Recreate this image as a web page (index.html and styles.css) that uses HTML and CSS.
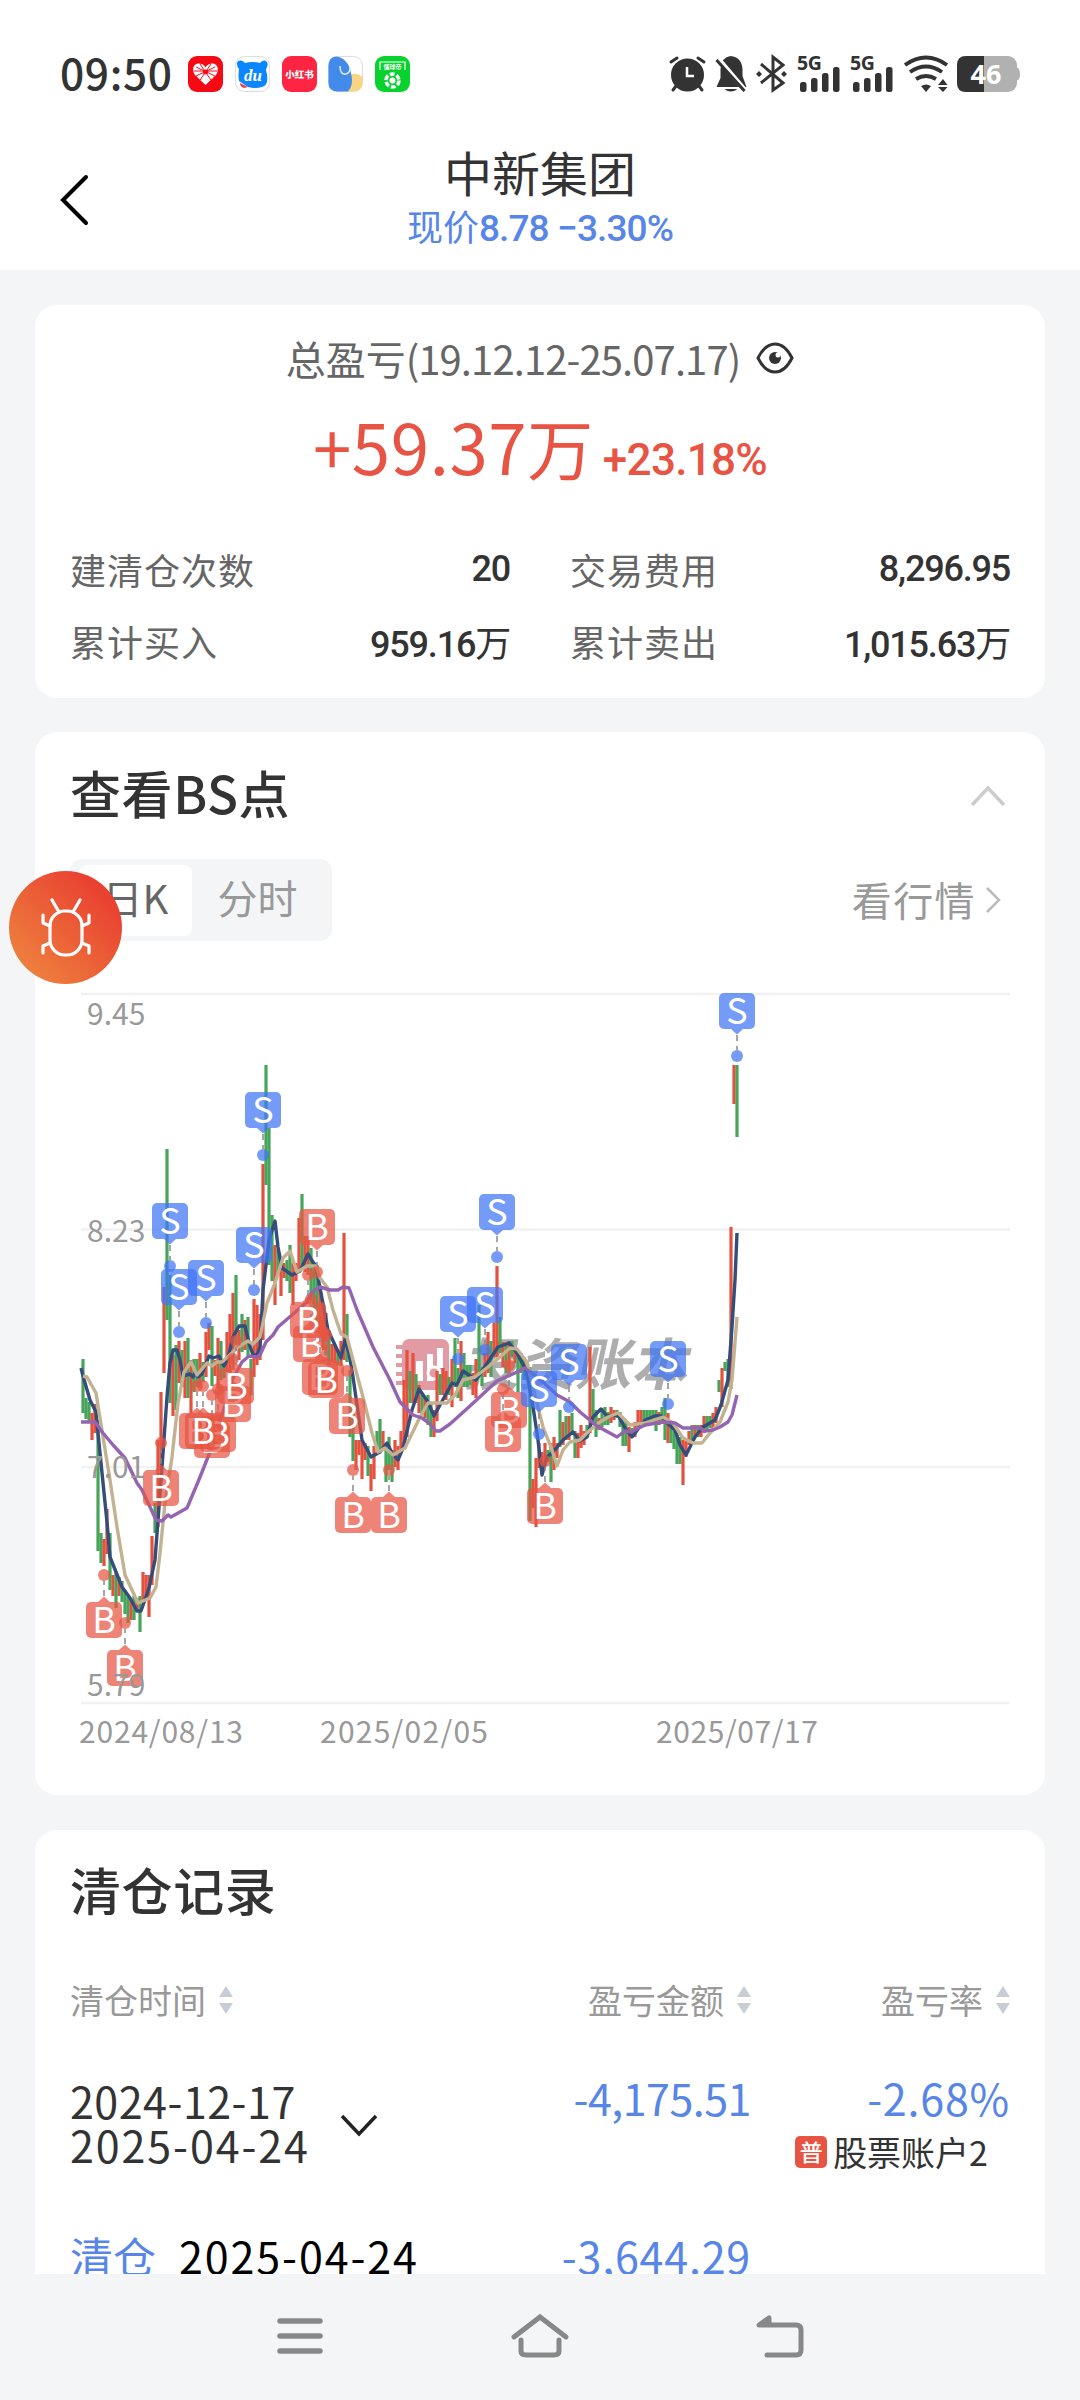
FILE: index.html
```
<!DOCTYPE html>
<html lang="zh-CN">
<head>
    <meta charset="UTF-8">
    <meta name="viewport" content="width=device-width, initial-scale=1.0">
    <title>中新集团</title>
    <link rel="stylesheet" href="styles.css">
</head>
<body>
    <header>
        <div class="status-bar">
            <span class="clock">09:50</span>
            <div class="app-icons">
                <svg width="35" height="36" viewBox="0 0 35 36">
                    <rect width="35" height="36" rx="9" fill="#f50a14"/>
                    <path d="M17.500 29L7 19C3 13 6 7 11 7.500Q16 8 17.500 11.500Q19 8 24 7.500C29 7 32 13 28 19Z" fill="#fff"/>
                    <path d="M8 11L27 20M27 11L8 20M12 8L23 24M23 8L12 24M6 15H29" stroke="#f50a14" stroke-width="1"/>
                    <circle cx="17.500" cy="16" r="2.500" fill="#f50a14"/>
                </svg>
                <svg width="35" height="36" viewBox="0 0 35 36">
                    <rect x=".5" y=".5" width="34" height="35" rx="9" fill="#fff" stroke="#ddd"/>
                    <path d="M2 8Q2 4 6 4.500Q9 5 10 7Q17 5 25 7Q27 4 30 4.500Q34 6 32 11Q31 13 31 14Q35 29 27 31Q20 33 13 31L4 25Q3 20 4 13Q2 11 2 8Z" fill="#0a86ff"/>
                    <path d="M5 27L13 31L9 32Q5 31 5 27Z" fill="#e8404c"/>
                    <text x="18" y="25" class="du">du</text>
                </svg>
                <svg width="35" height="36" viewBox="0 0 35 36">
                    <rect width="35" height="36" rx="9" fill="#ff2442"/>
                    <text x="17.500" y="22" class="red-book">小红书</text>
                </svg>
                <svg width="35" height="36" viewBox="0 0 35 36">
                    <rect x=".5" y=".5" width="34" height="35" rx="9" fill="#fff" stroke="#ddd"/>
                    <path d="M20 20Q27 15 34.500 21V27Q34 35 26 35.500H18Z" fill="#f8d483"/>
                    <path d="M8 .5Q20 2 23 17Q26 29 20 35.500H9Q.5 35 .5 27V9Q1 1 8 .5Z" fill="#428bea"/>
                    <path d="M12 10Q12 19 18 18Q22 17 22 12" fill="none" stroke="#d5e8ff" stroke-width="1.600"/>
                </svg>
                <svg width="35" height="36" viewBox="0 0 35 36">
                    <rect width="35" height="36" rx="9" fill="#08d22d"/>
                    <path d="M5 14V6H30V14" fill="none" stroke="#fff" stroke-width="1.200"/>
                    <text x="17.500" y="13" class="football">懂球帝</text>
                    <circle cx="17.500" cy="24.500" r="6.500" fill="none" stroke="#fff" stroke-width="3.500" stroke-dasharray="4.800 2"/>
                    <circle cx="17.500" cy="24.500" r="3" fill="#fff"/>
                </svg>
            </div>
            <svg class="sys-icons" width="353" height="38" viewBox="0 0 353 38">
                <!-- 闹钟 -->
                <g fill="none" stroke="#333" stroke-width="3" stroke-linecap="round">
                    <path d="M3 7L9 3M36 7L30 3M8 31L5 35M31 31L34 35"/>
                    <circle cx="19.500" cy="20" r="15" fill="#333"/>
                    <path d="M19 12V21H26" stroke="#fff" stroke-width="2.500" stroke-linecap="butt"/>
                </g>
                <!-- 静音 -->
                <g transform="translate(2.500 0)">
                    <path d="M60 1Q71 2 72 14V21L76 32H46L50 23V14Q51 2 60 1ZM54 34H67Q60 39 54 34Z" fill="#333"/>
                    <path d="M48 4L76 37" stroke="#fff" stroke-width="5"/>
                    <path d="M46 5L74 36" stroke="#333" stroke-width="3"/>
                </g>
                <!-- 蓝牙 -->
                <g transform="translate(4 0)">
                    <path d="M89 9L111 28L101 35V2L111 10L89 28" fill="none" stroke="#333" stroke-width="3"/>
                    <path d="M87 16L90 19L87 22L84 19ZM112 16L115 19L112 22L109 19Z" fill="#333"/>
                </g>
                <!-- 信号 -->
                <g fill="#333">
                    <text x="129" y="15" class="net">5G</text>
                    <rect x="132" y="27" width="6.500" height="10" rx="2.500"/>
                    <rect x="143" y="23" width="6.500" height="14" rx="2.500"/>
                    <rect x="154" y="18" width="6.500" height="19" rx="2.500"/>
                    <rect x="165" y="12" width="6.500" height="25" rx="2.500"/>
                    <text x="182" y="15" class="net">5G</text>
                    <rect x="185" y="27" width="6.500" height="10" rx="2.500"/>
                    <rect x="196" y="23" width="6.500" height="14" rx="2.500"/>
                    <rect x="207" y="18" width="6.500" height="19" rx="2.500"/>
                    <rect x="218" y="12" width="6.500" height="25" rx="2.500"/>
                </g>
                <!-- WiFi -->
                <g transform="translate(9 0)">
                    <path d="M228 10Q249 -5 270 10M233 17Q249 6 265 17M239 24Q249 18 259 24" fill="none" stroke="#333" stroke-width="3.800"/>
                    <path d="M244 31Q249 28 254 31L249 37ZM261 30L266 24L270.500 30ZM261 32H270.500L266 37Z" fill="#333"/>
                </g>
                <!-- 电量 -->
                <rect x="289" y="1" width="60" height="36" rx="9" fill="#b1b1b1"/>
                <path d="M348 12Q352 13 352 19Q352 25 348 26Z" fill="#b1b1b1"/>
                <path d="M316 1H298Q289 1 289 10V28Q289 37 298 37H316Z" fill="#333"/>
                <text x="318" y="28.500" class="battery">46</text>
            </svg>
        </div>
        <div class="title-bar">
            <svg class="back" width="30" height="52" viewBox="0 0 30 52">
                <path d="M27 3L4 26L27 49" fill="none" stroke="#000" stroke-width="4" stroke-linecap="round"/>
            </svg>
            <div class="stock">
                <h1>中新集团</h1>
                <p>现价<b>8.78 −3.30%</b></p>
            </div>
        </div>
    </header>

    <main>
        <section class="card summary">
            <div class="period">总盈亏<span>(19.12.12-25.07.17)</span>
                <svg width="38" height="32" viewBox="0 0 38 32">
                    <path d="M2 16Q9 2 19 2Q29 2 36 16Q29 30 19 30Q9 30 2 16Z" fill="none" stroke="#333" stroke-width="3"/>
                    <circle cx="19" cy="16" r="6" fill="#333"/>
                    <circle cx="22" cy="13" r="2.500" fill="#fff"/>
                </svg>
            </div>
            <div class="profit"><span class="total">+59.37<i>万</i></span><span class="rate">+23.18%</span></div>
            <div class="stats">
                <div><span>建清仓次数</span><b>20</b></div>
                <div><span>交易费用</span><b>8,296.95</b></div>
                <div><span>累计买入</span><b>959.16<i>万</i></b></div>
                <div><span>累计卖出</span><b>1,015.63<i>万</i></b></div>
            </div>
        </section>

        <section class="card bs">
            <div class="card-title">
                <h2>查看BS点</h2>
                <svg width="36" height="22" viewBox="0 0 36 22"><path d="M2 20L18 3L34 20" fill="none" stroke="#ccc" stroke-width="3.500"/></svg>
            </div>
            <div class="toolbar">
                <div class="tabs"><span class="tab active">日K</span><span class="tab">分时</span></div>
                <div class="quote">看行情
                    <svg width="16" height="28" viewBox="0 0 16 28"><path d="M2 2L14 14L2 26" fill="none" stroke="#bbb" stroke-width="2.500"/></svg>
                </div>
            </div>
            <svg id="chart" width="940" height="785" viewBox="70 985 940 785"></svg>
        </section>

        <section class="card records">
            <h2>清仓记录</h2>
            <div class="row head">
                <span>清仓时间<svg class="sort" width="16" height="30" viewBox="0 0 16 30"><path d="M8 1L15 12H1ZM1 18H15L8 29Z"/></svg></span>
                <span>盈亏金额<svg class="sort" width="16" height="30" viewBox="0 0 16 30"><path d="M8 1L15 12H1ZM1 18H15L8 29Z"/></svg></span>
                <span>盈亏率<svg class="sort" width="16" height="30" viewBox="0 0 16 30"><path d="M8 1L15 12H1ZM1 18H15L8 29Z"/></svg></span>
            </div>
            <div class="row item">
                <div class="dates">
                    <div><span class="open-date">2024-12-17</span><br><span class="close-date">2025-04-24</span></div>
                    <svg width="38" height="24" viewBox="0 0 38 24"><path d="M2 2L19 20L36 2" fill="none" stroke="#222" stroke-width="3.500"/></svg>
                </div>
                <div class="amount tight">-4,175.51</div>
                <div class="percent">
                    <div>-2.68%</div>
                    <div class="account"><em>普</em>股票账户2</div>
                </div>
            </div>
            <div class="row detail">
                <div><span class="tag">清仓</span><span class="close-date">2025-04-24</span></div>
                <div class="amount">-3,644.29</div>
                <div></div>
            </div>
        </section>
    </main>

    <div class="debug-btn">
        <svg width="54" height="62" viewBox="0 0 54 62">
            <g fill="none" stroke="#fff" stroke-width="3.200" stroke-linecap="round" stroke-linejoin="round">
                <path d="M13 3L20 15M41 3L34 15"/>
                <rect x="11" y="14" width="32" height="44" rx="15"/>
                <path d="M4 18V26L11 29M50 18V26L43 29M4 56V49L11 46M50 56V49L43 46"/>
            </g>
        </svg>
    </div>

    <nav>
        <svg width="48" height="46" viewBox="0 0 48 46"><path d="M4 8H44M4 23H44M4 38H44" stroke="#888" stroke-width="5.500" stroke-linecap="round"/></svg>
        <svg width="60" height="46" viewBox="0 0 60 46"><path d="M4 24L30 4L56 24M11 27V38Q11 42 16 42H44Q49 42 49 38V27" fill="none" stroke="#888" stroke-width="5" stroke-linecap="round"/></svg>
        <svg width="50" height="46" viewBox="0 0 50 46"><path d="M12 42H41Q46 42 46 37V17Q46 12 41 12H4L14 5V12" fill="none" stroke="#888" stroke-width="5" stroke-linecap="round" stroke-linejoin="round"/></svg>
    </nav>

    <script>
        // 每根K线: 颜色, 最高, 最低 (横向间隔3px, 从x=83开始)
        const bars = `g1359-1413 g1398-1419 g1402-1423 r1413-1440 r1404-1433 g1420-1551 g1533-1563 r1539-1566 r1509-1554 g1533-1590
            r1575-1596 g1573-1608 r1577-1596 g1581-1602 g1590-1614 g1597-1623 r1600-1620 g1596-1620 r1598-1612 g1596-1632
            r1572-1603 r1575-1600 r1575-1617 r1536-1585 g1503-1533 r1440-1527 r1392-1470 r1287-1373 g1149-1320 g1275-1403
            r1355-1416 g1345-1410 r1341-1383 g1350-1387 r1341-1398 g1338-1398 r1360-1413 g1359-1392 g1359-1387 r1353-1387
            g1362-1382 r1332-1377 r1323-1350 g1326-1386 r1360-1376 r1338-1388 g1341-1380 g1362-1378 r1332-1372 r1314-1375
            r1293-1370 g1275-1345 r1330-1360 g1314-1352 r1320-1350 g1317-1357 g1359-1395 r1299-1377 r1305-1365 r1314-1360
            r1164-1340 g1065-1185 g1128-1265 g1215-1281 r1245-1305 g1250-1275 r1263-1296 r1263-1278 g1260-1281 g1245-1293
            r1263-1305 r1263-1281 r1218-1270 g1194-1268 r1236-1272 r1236-1275 g1248-1300 g1262-1315 g1265-1335 r1290-1330
            r1305-1350 r1313-1355 g1330-1365 r1344-1362 r1345-1363 g1350-1365 r1341-1366 r1233-1360 g1314-1362 g1370-1437
            g1407-1461 r1440-1470 r1440-1455 r1440-1479 r1443-1460 g1446-1476 r1464-1491 r1446-1479 g1431-1447 g1419-1450
            r1431-1447 g1443-1482 g1437-1470 g1450-1482 r1440-1467 r1446-1470 r1431-1453 r1380-1450 r1350-1437 g1371-1403
            r1353-1403 g1374-1403 r1385-1413 g1395-1413 r1398-1418 g1395-1425 g1403-1437 r1410-1437 r1371-1421 g1374-1395
            r1368-1395 r1371-1400 g1377-1395 r1359-1407 g1338-1387 g1368-1398 r1341-1401 g1353-1387 g1365-1387 g1365-1385
            r1373-1395 r1359-1398 g1305-1377 g1367-1386 r1353-1377 r1332-1373 g1341-1377 r1323-1357 r1266-1357 g1317-1353
            r1342-1367 g1343-1373 r1341-1377 g1341-1357 r1347-1363 g1353-1392 g1353-1373 g1357-1380 r1363-1380 g1367-1521
            r1479-1508 r1458-1527 r1443-1468 r1452-1473 r1443-1465 g1450-1462 g1443-1482 r1437-1470 r1443-1458 g1410-1447
            r1422-1445 g1416-1440 r1416-1440 g1413-1433 g1431-1458 r1433-1458 r1425-1448 r1431-1445 g1425-1437 r1347-1433
            g1389-1425 g1410-1437 r1418-1430 g1408-1427 g1407-1425 g1412-1425 r1407-1423 r1410-1420 g1410-1418 g1412-1427
            g1418-1446 g1422-1446 r1427-1452 g1428-1437 r1422-1437 r1410-1430 r1410-1427 g1410-1427 g1410-1425 g1410-1425
            g1410-1425 g1410-1431 r1412-1425 g1407-1423 g1398-1440 r1413-1443 g1423-1443 g1423-1449 g1430-1464 g1437-1464
            r1440-1485 r1440-1457 r1431-1445 g1425-1443 r1425-1437 g1425-1437 r1425-1437 r1416-1433 g1416-1430 g1416-1428
            r1413-1430 r1407-1423 g1380-1392 r1368-1407 g1362-1371 g1359-1387 r1227-1389 r1065-1104 g1065-1137`.trim().split(/\s+/);

        const tan = '83,1376 87,1377 96,1393 103,1437 110,1480 117,1527 125,1575 138,1603 150,1598 156,1587 160,1553 165,1503 172,1457 178,1403 184,1372 191,1362 197,1375 207,1363 212,1366 217,1362 222,1362 232,1353 238,1347 248,1341 253,1344 260,1337 267,1303 275,1283 283,1258 290,1251 297,1272 307,1266 316,1266 320,1278 327,1287 333,1310 341,1334 347,1337 353,1360 363,1397 372,1433 378,1452 385,1448 393,1455 405,1448 420,1417 428,1403 447,1403 455,1395 463,1380 475,1377 488,1367 500,1357 510,1348 517,1349 527,1362 533,1387 543,1427 552,1450 557,1466 563,1450 570,1442 580,1440 590,1430 600,1422 608,1417 618,1413 630,1425 645,1423 663,1417 673,1423 683,1438 693,1443 702,1443 710,1433 720,1422 728,1402 732,1380 737,1317';
        const navy = '81,1368 83,1376 90,1400 96,1412 98,1433 102,1473 107,1522 110,1557 122,1587 130,1598 137,1611 141,1611 149,1588 155,1560 159,1507 163,1453 167,1397 170,1363 173,1350 177,1350 180,1360 183,1376 190,1374 193,1377 195,1373 198,1377 202,1374 209,1356 213,1358 219,1356 224,1366 228,1358 233,1337 239,1326 245,1326 249,1343 253,1355 257,1355 260,1347 263,1290 269,1240 275,1221 278,1247 282,1268 292,1275 300,1271 308,1254 316,1267 321,1293 328,1330 341,1358 345,1340 349,1353 353,1377 362,1440 371,1457 380,1452 387,1443 392,1453 398,1460 403,1448 412,1410 419,1389 428,1402 434,1416 440,1405 452,1383 457,1385 463,1371 476,1380 488,1362 498,1347 509,1343 517,1353 526,1370 532,1400 538,1440 542,1475 547,1457 553,1452 563,1440 573,1432 580,1441 587,1437 593,1417 601,1409 607,1416 618,1415 625,1428 632,1437 645,1420 655,1416 662,1416 667,1423 675,1430 680,1445 686,1455 695,1437 703,1427 715,1420 721,1405 728,1380 732,1327 735,1280 737,1233';
        const purple = '81,1422 95,1422 103,1433 113,1445 125,1458 137,1483 142,1490 150,1507 156,1520 162,1521 168,1515 171,1517 187,1508 198,1482 210,1452 230,1390 232,1380 242,1362 249,1356 257,1357 260,1355 266,1342 273,1335 278,1327 307,1302 312,1292 320,1287 330,1290 338,1290 343,1287 349,1288 357,1310 373,1347 390,1380 400,1402 413,1415 422,1418 429,1423 436,1431 440,1431 450,1424 470,1406 497,1381 515,1373 525,1368 543,1382 557,1395 570,1402 580,1412 597,1426 617,1437 625,1431 631,1432 645,1425 663,1422 675,1423 683,1428 700,1428 705,1431 713,1430 720,1427 728,1422 732,1415 737,1395';

        // 买卖点: 类型, x, 圆点y, 标签方向 (-1在上, 1在下)
        const points = [
            ['B', 104, 1575, 1], ['B', 125, 1623, 1], ['B', 161, 1443, 1], ['B', 212, 1395, 1], ['B', 218, 1389, 1],
            ['B', 197, 1386, 1], ['B', 203, 1386, 1], ['B', 233, 1359, 1], ['B', 236, 1341, 1], ['B', 317, 1272, -1],
            ['B', 311, 1299, 1], ['B', 308, 1275, 1], ['B', 320, 1332, 1], ['B', 326, 1335, 1], ['B', 347, 1371, 1],
            ['B', 353, 1470, 1], ['B', 389, 1470, 1], ['B', 509, 1365, 1], ['B', 503, 1389, 1], ['B', 545, 1461, 1],
            ['S', 170, 1266, -1], ['S', 179, 1332, -1], ['S', 206, 1323, -1], ['S', 254, 1290, -1], ['S', 263, 1155, -1],
            ['S', 458, 1359, -1], ['S', 485, 1350, -1], ['S', 497, 1257, -1], ['S', 539, 1434, -1], ['S', 569, 1407, -1],
            ['S', 668, 1404, -1], ['S', 737, 1056, -1]
        ];

        let svg = '';
        [994, 1229.5, 1467, 1703].forEach(y => {
            svg += `<path class="grid" d="M81 ${y}H1010"/>`;
        });

        // 水印
        svg += `<g fill="#e29ba4"><rect x="402" y="1339" width="47" height="51" rx="7"/>
            <path d="M396 1345h10v4h-10zM396 1354h10v4h-10zM396 1363h10v4h-10zM396 1372h10v4h-10zM396 1381h10v4h-10z"/></g>
            <path d="M416 1361h7v20h-7zM427 1354h6v27h-6zM437 1348h6v20h-6z" fill="#fff"/>
            <circle cx="434" cy="1373" r="6" fill="#e29ba4" stroke="#fff" stroke-width="3"/>
            <text class="watermark" transform="translate(463 1385) skewX(-12)" textLength="224">投资账本</text>`;

        bars.forEach((bar, i) => {
            const [top, bottom] = bar.slice(1).split('-').map(Number);
            svg += `<rect class="${bar[0] === 'r' ? 'up' : 'down'}" x="${81.4 + i * 3}" y="${top}" width="3.200" height="${bottom - top}"/>`;
        });

        svg += `<polyline class="line navy" points="${navy}"/><polyline class="line tan" points="${tan}"/><polyline class="line purple" points="${purple}"/>`;

        points.forEach(([type, x, y, dir]) => {
            const cy = y + dir * 45;
            const edge = cy - dir * 18;
            svg += `<g class="point ${type === 'B' ? 'buy' : 'sell'}">
                <path class="stem" d="M${x} ${y + dir * 6}v${dir * 4}M${x} ${y + dir * 15}v${dir * 6}"/>
                <g class="shape"><circle cx="${x}" cy="${y}" r="6"/>
                <rect x="${x - 18}" y="${cy - 18}" width="36" height="36" rx="5"/>
                <path d="M${x - 6} ${edge}L${x} ${edge - dir * 5.5}L${x + 6} ${edge}Z"/></g>
                <text x="${x}" y="${cy + 13}">${type}</text></g>`;
        });

        [['9.45', 1025], ['8.23', 1242], ['7.01', 1478], ['5.79', 1696]].forEach(([label, y]) => {
            svg += `<text class="axis" x="87" y="${y}">${label}</text>`;
        });
        [['2024/08/13', 79, 164], ['2025/02/05', 320, 168], ['2025/07/17', 656, 162]].forEach(([label, x, width]) => {
            svg += `<text class="axis" x="${x}" y="1743" textLength="${width}">${label}</text>`;
        });

        document.getElementById('chart').innerHTML = svg;
    </script>
</body>
</html>
```
FILE: styles.css
```
* {
    box-sizing: border-box;
}

body {
    margin: 0;
    width: 1080px;
    height: 2400px;
    display: flex;
    flex-direction: column;
    overflow: hidden;
    position: relative;
    background: #f3f5f7;
    color: #333;
    font-family: "Noto Sans CJK SC", sans-serif;
}

h1, h2, p {
    margin: 0;
}

svg {
    display: block;
    flex: none;
    overflow: visible;
}

i, em {
    font-style: normal;
}

header {
    height: 270px;
    background: #fff;
    flex: none;
}

.status-bar {
    display: flex;
    align-items: center;
    height: 148px;
    padding: 0 60px;
}

.clock {
    width: 128px;
    padding-bottom: 5px;
    font-size: 42.5px;
    font-weight: 500;
    letter-spacing: 0.6px;
    line-height: 60px;
}

.app-icons {
    display: flex;
    gap: 11.8px;
}

.sys-icons {
    margin-left: auto;
    margin-right: -1px;
}

.du {
    font: italic bold 17px "Liberation Serif", serif;
    fill: #fff;
    text-anchor: middle;
}

.red-book {
    font-size: 9.5px;
    font-weight: 900;
    fill: #fff;
    text-anchor: middle;
}

.football {
    font-size: 6px;
    font-weight: 700;
    fill: #fff;
    text-anchor: middle;
}

.net {
    font: 700 19.5px "Noto Sans", sans-serif;
    letter-spacing: -0.5px;
}

.battery {
    font: 700 27px "Noto Sans", sans-serif;
    fill: #fff;
    text-anchor: middle;
}

.title-bar {
    display: flex;
    align-items: center;
    height: 104px;
}

.back {
    margin-left: 59px;
}

.stock {
    width: 902px;
    text-align: center;
}

.stock h1 {
    font-size: 48px;
    font-weight: 400;
    line-height: 53px;
}

.stock p {
    font-size: 36px;
    line-height: 55px;
    color: #5785e8;
}

.stock b {
    font-family: Roboto, sans-serif;
    font-weight: 500;
    font-size: 37px;
    letter-spacing: -0.9px;
}

main {
    flex: 1;
    min-height: 0;
    overflow: hidden;
    padding: 35px 35px 0;
}

.card {
    background: #fff;
    border-radius: 22px;
    padding: 0 35px;
    margin-bottom: 34px;
}

.card h2 {
    font-size: 51px;
    font-weight: 500;
    letter-spacing: 0.6px;
}

.summary {
    height: 393px;
    padding-top: 24px;
}

.period {
    display: flex;
    align-items: center;
    justify-content: center;
    height: 58px;
    font-size: 40px;
    color: #666;
}

.period span {
    letter-spacing: -0.9px;
}

.period svg {
    margin-left: 16px;
}

.profit {
    display: flex;
    align-items: baseline;
    justify-content: center;
    height: 118px;
    line-height: 116px;
    color: #e85443;
}

.total {
    font-size: 69px;
    letter-spacing: 0.6px;
}

.total i {
    font-size: 66px;
}

.rate {
    margin-left: 9px;
    font: 500 44px Roboto, sans-serif;
    letter-spacing: -0.7px;
}

.stats {
    display: grid;
    grid-template-columns: 440px 440px;
    column-gap: 60px;
    margin-top: 28px;
}

.stats div {
    display: flex;
    justify-content: space-between;
    align-items: center;
    height: 72px;
    font-size: 36px;
}

.stats span {
    color: #666;
    letter-spacing: 1px;
}

.stats b {
    font-family: Roboto, "Noto Sans CJK SC", sans-serif;
    font-weight: 500;
    letter-spacing: -1.2px;
}

.stats i {
    font-weight: 400;
}

.bs {
    height: 1063px;
    margin-bottom: 35px;
}

.card-title {
    display: flex;
    align-items: center;
    justify-content: space-between;
    height: 127px;
    padding-right: 4px;
}

.card-title h2 {
    padding-bottom: 7px;
}

.toolbar {
    display: flex;
    align-items: center;
    justify-content: space-between;
    height: 82px;
    font-size: 40px;
}

.tabs {
    display: flex;
    gap: 9px;
    width: 262px;
    height: 82px;
    padding: 6px 9px;
    border-radius: 12px;
    background: #f3f5f7;
}

.tab {
    width: 113px;
    height: 71px;
    line-height: 65px;
    text-align: center;
    border-radius: 8px;
    color: #999;
}

.tab.active {
    background: #fff;
    color: #666;
}

.quote {
    display: flex;
    align-items: center;
    line-height: 60px;
    padding-bottom: 3px;
    color: #999;
    letter-spacing: 1.4px;
}

.quote svg {
    margin: 3px 9px 0 9px;
}

#chart {
    margin-top: 44px;
}

.grid {
    stroke: #f1f1f3;
    stroke-width: 2.5;
}

.watermark {
    font-size: 56px;
    font-weight: 700;
    fill: #adadad;
}

.up {
    fill: #e4523f;
}

.down {
    fill: #47a559;
}

.line {
    fill: none;
    stroke-width: 3.4;
    stroke-linejoin: round;
}

.navy {
    stroke: #344d7b;
}

.tan {
    stroke: #c2b291;
}

.purple {
    stroke: #9464b0;
}

.stem {
    stroke: #888;
    stroke-width: 1.5;
}

.shape {
    fill-opacity: 0.72;
}

.buy .shape {
    fill: #e85443;
}

.sell .shape {
    fill: #4075f6;
}

.point text {
    font-size: 36px;
    fill: #fff;
    text-anchor: middle;
}

.axis {
    font-size: 30px;
    fill: #999;
}

.records {
    height: 560px;
    padding-top: 23px;
    margin-bottom: 0;
}

.records h2 {
    line-height: 72px;
}

.row {
    display: grid;
    grid-template-columns: 400px 281px 259px;
}

.row > :not(:first-child) {
    text-align: right;
    justify-content: flex-end;
}

.head {
    margin-top: 50px;
    font-size: 34px;
    line-height: 50px;
    color: #999;
}

.head span {
    display: flex;
    align-items: center;
}

.sort {
    margin-left: 12px;
    margin-right: -1px;
    fill: #c8cdd3;
}

.item {
    margin-top: 42px;
    height: 130px;
    font-size: 43px;
}

.dates {
    display: flex;
    align-items: center;
    height: 110px;
    line-height: 44px;
}

.open-date {
    letter-spacing: 0.5px;
}

.close-date {
    letter-spacing: 1.9px;
}

.dates svg {
    margin-left: 30px;
    margin-top: 8px;
}

.amount, .percent {
    color: #5785e8;
    line-height: 60px;
    letter-spacing: 0.8px;
}

.amount.tight {
    letter-spacing: -0.5px;
}

.account {
    display: flex;
    align-items: center;
    justify-content: flex-end;
    height: 50px;
    margin-right: 22px;
    font-size: 34px;
    letter-spacing: 0;
    color: #333;
}

.account em {
    width: 32px;
    height: 32px;
    margin-right: 6px;
    border-radius: 5px;
    background: #e85443;
    color: #fff;
    font-size: 23px;
    font-weight: 500;
    line-height: 31px;
    text-align: center;
}

.detail {
    margin-top: 28px;
    font-size: 43px;
    line-height: 60px;
    color: #000;
}

.tag {
    margin-right: 23px;
    color: #5785e8;
}

.debug-btn {
    position: absolute;
    left: 9px;
    top: 871px;
    width: 113px;
    height: 113px;
    display: flex;
    align-items: center;
    justify-content: center;
    border-radius: 50%;
    background: linear-gradient(45deg, #ee843e 8%, #e93f31 85%);
}

nav {
    height: 126px;
    flex: none;
    display: flex;
    align-items: center;
    justify-content: space-between;
    padding: 0 275px 2px 276px;
    background: #f3f5f7;
}
```
